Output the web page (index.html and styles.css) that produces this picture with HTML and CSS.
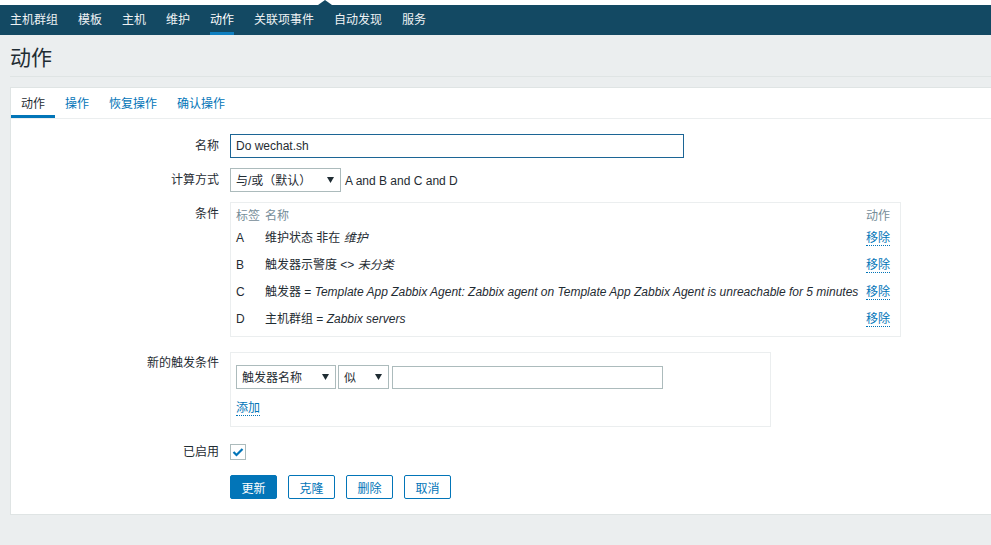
FILE: index.html
```html
<!DOCTYPE html>
<html lang="zh-CN">
<head>
<meta charset="utf-8">
<title>动作</title>
<link rel="stylesheet" href="styles.css">
</head>
<body>
<div class="topstrip"><span class="notch"></span></div>
<nav class="topnav">
  <a class="nav-item">主机群组</a>
  <a class="nav-item">模板</a>
  <a class="nav-item">主机</a>
  <a class="nav-item">维护</a>
  <a class="nav-item active">动作</a>
  <a class="nav-item">关联项事件</a>
  <a class="nav-item">自动发现</a>
  <a class="nav-item">服务</a>
</nav>
<header class="page-head"><h1 class="page-title">动作</h1></header>
<main class="card">
  <ul class="tabs">
    <li class="tab active">动作</li>
    <li class="tab">操作</li>
    <li class="tab">恢复操作</li>
    <li class="tab">确认操作</li>
  </ul>
  <div class="form">
    <div class="row r-name">
      <div class="lbl">名称</div>
      <div class="ctl"><div class="textbox focused name-box">Do wechat.sh</div></div>
    </div>
    <div class="row r-calc">
      <div class="lbl">计算方式</div>
      <div class="ctl inline">
        <div class="select sel-calc"><span class="sel-text">与/或（默认）</span><svg class="arrow" width="7" height="6" viewBox="0 0 7 6"><polygon points="0,0 7,0 3.5,6" fill="#1f2c33"/></svg></div>
        <span class="formula">A and B and C and D</span>
      </div>
    </div>
    <div class="row r-cond">
      <div class="lbl">条件</div>
      <div class="ctl">
        <div class="cond-box">
          <div class="ctable">
            <div class="th">标签</div><div class="th">名称</div><div class="th th-act">动作</div>
            <div class="td">A</div><div class="td">维护状态 非在 <i>维护</i></div><div class="td td-act"><a class="dlink">移除</a></div>
            <div class="td">B</div><div class="td">触发器示警度 &lt;&gt; <i>未分类</i></div><div class="td td-act"><a class="dlink">移除</a></div>
            <div class="td">C</div><div class="td">触发器 = <i>Template App Zabbix Agent: Zabbix agent on Template App Zabbix Agent is unreachable for 5 minutes</i></div><div class="td td-act"><a class="dlink">移除</a></div>
            <div class="td">D</div><div class="td">主机群组 = <i>Zabbix servers</i></div><div class="td td-act"><a class="dlink">移除</a></div>
          </div>
        </div>
      </div>
    </div>
    <div class="row r-new">
      <div class="lbl lbl-top">新的触发条件</div>
      <div class="ctl">
        <div class="new-box">
          <div class="new-line">
            <div class="select sel-type"><span class="sel-text">触发器名称</span><svg class="arrow" width="7" height="6" viewBox="0 0 7 6"><polygon points="0,0 7,0 3.5,6" fill="#1f2c33"/></svg></div>
            <div class="select sel-op"><span class="sel-text">似</span><svg class="arrow" width="7" height="6" viewBox="0 0 7 6"><polygon points="0,0 7,0 3.5,6" fill="#1f2c33"/></svg></div>
            <div class="textbox val-box"></div>
          </div>
          <div class="add-line"><a class="dlink">添加</a></div>
        </div>
      </div>
    </div>
    <div class="row r-enabled">
      <div class="lbl lbl-check">已启用</div>
      <div class="ctl">
        <span class="checkbox"><svg width="12" height="10" viewBox="0 0 12 10"><polyline points="1.5,5 4.5,8 10.5,2" fill="none" stroke="#0275b8" stroke-width="2.2"/></svg></span>
      </div>
    </div>
    <div class="row r-buttons">
      <div class="lbl"></div>
      <div class="ctl buttons">
        <button class="btn primary">更新</button>
        <button class="btn">克隆</button>
        <button class="btn">删除</button>
        <button class="btn">取消</button>
      </div>
    </div>
  </div>
</main>
</body>
</html>
```

FILE: styles.css
```css
* { box-sizing: border-box; }
html, body { margin: 0; padding: 0; }
body {
  background: #ebeeef;
  font-family: "Liberation Sans", "Noto Sans CJK SC", sans-serif;
  font-size: 12px;
  color: #1f2c33;
  overflow: hidden;
  height: 545px;
}
.topstrip { height: 5px; background: #fff; position: relative; }
.notch {
  position: absolute; left: 318px; top: 0;
  width: 0; height: 0;
  border-left: 7px solid transparent;
  border-right: 7px solid transparent;
  border-bottom: 5px solid #134963;
}
.topnav {
  display: flex; height: 30px; background: #134963;
  padding-left: 10px;
}
.nav-item {
  color: #eef2f4; font-size: 12px; height: 30px; line-height: 24px;
  padding-top: 3px;
  border-bottom: 3px solid transparent; margin-right: 20px;
  text-decoration: none;
}
.nav-item.active { border-bottom-color: #0f7fc0; color: #fff; }

.page-head { margin-left: 10px; border-bottom: 1px solid #dfe4e4; padding: 10px 0 6px; }
.page-title { margin: 0; font-size: 21px; line-height: 25px; font-weight: normal; color: #1f2c33; }

.card {
  margin: 10px 0 0 10px; background: #fff;
  border: 1px solid #dfe4e4; border-right: none;
}
.tabs {
  list-style: none; margin: 0; padding: 0; display: flex;
  height: 31px; border-bottom: 1px solid #ebeeef;
}
.tab { padding: 2px 10px 0; line-height: 28px; height: 30px; color: #0275b8; }
.tab.active { color: #1f2c33; box-shadow: inset 0 -3px 0 #0275b8; }

.form { padding: 15px 0 15px; }
.row { display: grid; grid-template-columns: 208px 1fr; column-gap: 11px; }
.r-calc, .r-cond { margin-top: 10px; }
.r-new { margin-top: 15px; }
.r-enabled { margin-top: 17px; }
.r-buttons { margin-top: 15px; }
.lbl { text-align: right; line-height: 24px; }
.lbl-top { line-height: 22px; }
.lbl-check { line-height: 16px; }
.ctl.inline { display: flex; align-items: center; }

.textbox {
  height: 24px; border: 1px solid #acbbbc; padding: 0 5px; line-height: 22px;
  background: #fff;
}
.textbox.focused { border-color: #1c6595; }
.name-box { width: 454px; }

.select {
  height: 24px; border: 1px solid #acbbbc; background: #fff;
  display: flex; align-items: center; justify-content: space-between;
  padding: 0 6px 0 5px;
}
.sel-text { line-height: 16px; padding-top: 2px; }
.sel-calc { width: 111px; }
.formula { margin-left: 4px; padding-top: 2px; }
.arrow { display: block; }

.cond-box {
  width: 671px; border: 1px solid #ebeeef; padding: 0 10px 4px 5px;
}
.ctable { display: grid; grid-template-columns: 29px 1fr auto; }
.th { color: #768d99; line-height: 14px; padding: 6px 0 1px; }
.td { line-height: 14px; padding: 7px 0 6px; height: 27px; white-space: nowrap; }
.th-act, .td-act { text-align: right; }
.dlink {
  color: #0275b8; text-decoration: none; border-bottom: 1px dotted #0275b8;
  display: inline-block; line-height: 14px;
}

.new-box {
  width: 541px; border: 1px solid #ebeeef; padding: 12px 5px 10px;
}
.new-line { display: flex; align-items: flex-start; }
.sel-type { width: 100px; }
.sel-op { width: 51px; margin-left: 2px; padding-right: 6px; }
.val-box { width: 271px; margin-left: 3px; margin-top: 1px; height: 23px; }
.add-line { margin-top: 12px; height: 15px; }

.checkbox {
  display: flex; width: 16px; height: 16px; border: 1px solid #acbbbc;
  align-items: center; justify-content: center; background: #fff;
}

.buttons { display: flex; gap: 11px; }
.btn {
  width: 47px; height: 24px; padding: 0; border: 1px solid #0275b8;
  border-radius: 2px; background: #fff; color: #0275b8;
  font-family: "Liberation Sans", "Noto Sans CJK SC", sans-serif; font-size: 12px;
}
.btn.primary { background: #0275b8; color: #fff; }
```
